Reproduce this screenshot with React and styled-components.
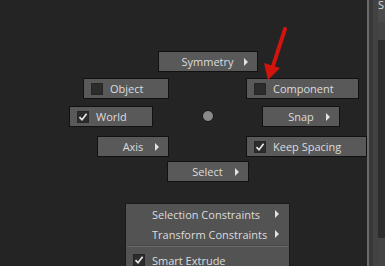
import React from 'react';
import styled, { createGlobalStyle } from 'styled-components';

const GlobalStyle = createGlobalStyle`
    body {
        margin: 0;
        background: #242424;
        font-family: "Open Sans", "Liberation Sans", sans-serif;
    }
`;

const Page = styled.div`
    display: flex;
    width: 385px;
    height: 266px;
    overflow: hidden;
    background: #242424;
`;

const Canvas = styled.div`
    position: relative;
    width: 367px;
    flex: none;
    padding-top: 51px;
    box-sizing: border-box;
`;

const Radial = styled.div`
    display: grid;
    grid-template-columns: 169px 77px 1fr;
    grid-template-rows: 27px 28px 30px 25px 42px auto;
`;

const Button = styled.div`
    box-sizing: border-box;
    width: ${(p) => p.w}px;
    height: 21px;
    background: #595959;
    border: 1px solid #111;
    color: #dcdcdc;
    font-size: 11px;
    line-height: 19px;
    grid-row: ${(p) => p.row};
    grid-column: ${(p) => p.col};
    justify-self: ${(p) => p.align || 'center'};
    margin: ${(p) => p.m || '0'};
`;

const SubButton = styled(Button)`
    display: grid;
    grid-template-columns: 1fr auto 1fr;
    align-items: center;
    padding-right: 9px;
    padding-left: 9px;
`;

const Label = styled.span`
    grid-column: 2;
    white-space: nowrap;
`;

const Tri = styled.span`
    grid-column: 3;
    justify-self: end;
    width: 0;
    height: 0;
    border-top: 4px solid transparent;
    border-bottom: 4px solid transparent;
    border-left: 4px solid #e2e2e2;
`;

const CheckButton = styled(Button)`
    display: flex;
    align-items: center;
    gap: 7px;
    padding-left: 7px;
`;

const Box = styled.span`
    box-sizing: border-box;
    width: 12px;
    height: 12px;
    flex: none;
    background: #2c2c2c;
    border: 1px solid #262626;
    display: flex;
    align-items: center;
    justify-content: center;
`;

const Dot = styled.div`
    grid-row: 3;
    grid-column: 2;
    justify-self: center;
    align-self: start;
    margin-top: 4px;
    width: 12px;
    height: 12px;
    border-radius: 50%;
    background: #8a8a8a;
    border: 1px solid #161616;
    box-sizing: border-box;
`;

const Menu = styled.div`
    grid-row: 6;
    grid-column: 2;
    justify-self: center;
    width: 165px;
    box-sizing: border-box;
    background: #535353;
    border: 1px solid #1a1a1a;
    border-bottom: none;
    color: #dcdcdc;
    font-size: 11px;
`;

const MenuItem = styled.div`
    display: flex;
    align-items: center;
    height: 20px;
    padding-left: 7px;
    padding-right: 10px;
`;

const MenuText = styled.span`
    flex: 1;
    margin-left: 19px;
    white-space: nowrap;
`;

const MenuCheckText = styled.span`
    flex: 1;
    margin-left: 7px;
    white-space: nowrap;
`;

const Divider = styled.div`
    height: 1px;
    margin: 1px 1px 3px;
    background: #6a6a6a;
    border-top: 1px solid #474747;
`;

const Annotation = styled.svg`
    position: absolute;
    left: 0;
    top: 0;
    pointer-events: none;
`;

const Sidebar = styled.div`
    flex: 1;
    display: flex;
    border-left: 2px solid #6b6b6b;
`;

const Gutter = styled.div`
    width: 4px;
    background: #383838;
`;

const Rail = styled.div`
    width: 5px;
    background: #424242;
`;

const Panel = styled.div`
    flex: 1;
    display: flex;
    flex-direction: column;
    background: #444;
`;

const PanelHead = styled.div`
    height: 22px;
    background: #4b4b4b;
    color: #d8d8d8;
    font-size: 11px;
    line-height: 10px;
    overflow: hidden;
    white-space: nowrap;
`;

const PanelBody = styled.div`
    height: 198px;
    margin-top: 18px;
    background: #2c2c2c;
`;

const Check = () => (
    <svg width="10" height="10" viewBox="0 0 10 10">
        <polyline points="1.5,5.2 4,7.8 8.6,1.8" fill="none" stroke="#e6e6e6" strokeWidth="1.7" />
    </svg>
);

const Sub = ({ w, row, col, align, m, children }) => (
    <SubButton w={w} row={row} col={col} align={align} m={m}>
        <Label>{children}</Label>
        <Tri />
    </SubButton>
);

const Toggle = ({ w, row, col, align, m, checked, children }) => (
    <CheckButton w={w} row={row} col={col} align={align} m={m}>
        <Box>{checked && <Check />}</Box>
        <span>{children}</span>
    </CheckButton>
);

export default function App() {
    return (
        <Page>
            <GlobalStyle />
            <Canvas>
                <Radial>
                    <Sub w={100} row={1} col={2}>Symmetry</Sub>
                    <Toggle w={86} row={2} col={1} align="end">Object</Toggle>
                    <Toggle w={113} row={2} col={3} align="start">Component</Toggle>
                    <Toggle w={84} row={3} col={1} align="end" m="0 16px 0 0" checked>World</Toggle>
                    <Dot />
                    <Sub w={78} row={3} col={3} align="start" m="0 0 0 16px">Snap</Sub>
                    <Sub w={72} row={4} col={1} align="end">Axis</Sub>
                    <Toggle w={121} row={4} col={3} align="start" checked>Keep Spacing</Toggle>
                    <Sub w={82} row={5} col={2}>Select</Sub>
                    <Menu>
                        <MenuItem>
                            <MenuText>Selection Constraints</MenuText>
                            <Tri />
                        </MenuItem>
                        <MenuItem>
                            <MenuText>Transform Constraints</MenuText>
                            <Tri />
                        </MenuItem>
                        <Divider />
                        <MenuItem>
                            <Box><Check /></Box>
                            <MenuCheckText>Smart Extrude</MenuCheckText>
                        </MenuItem>
                    </Menu>
                </Radial>
                <Annotation width="367" height="266">
                    <line x1="285" y1="29" x2="273" y2="66" stroke="#d2140f" strokeWidth="4" strokeLinecap="round" />
                    <polygon points="264,63 280,68 268,80" fill="#d2140f" />
                </Annotation>
            </Canvas>
            <Sidebar>
                <Gutter />
                <Rail />
                <Panel>
                    <PanelHead>S</PanelHead>
                    <PanelBody />
                </Panel>
            </Sidebar>
        </Page>
    );
}
